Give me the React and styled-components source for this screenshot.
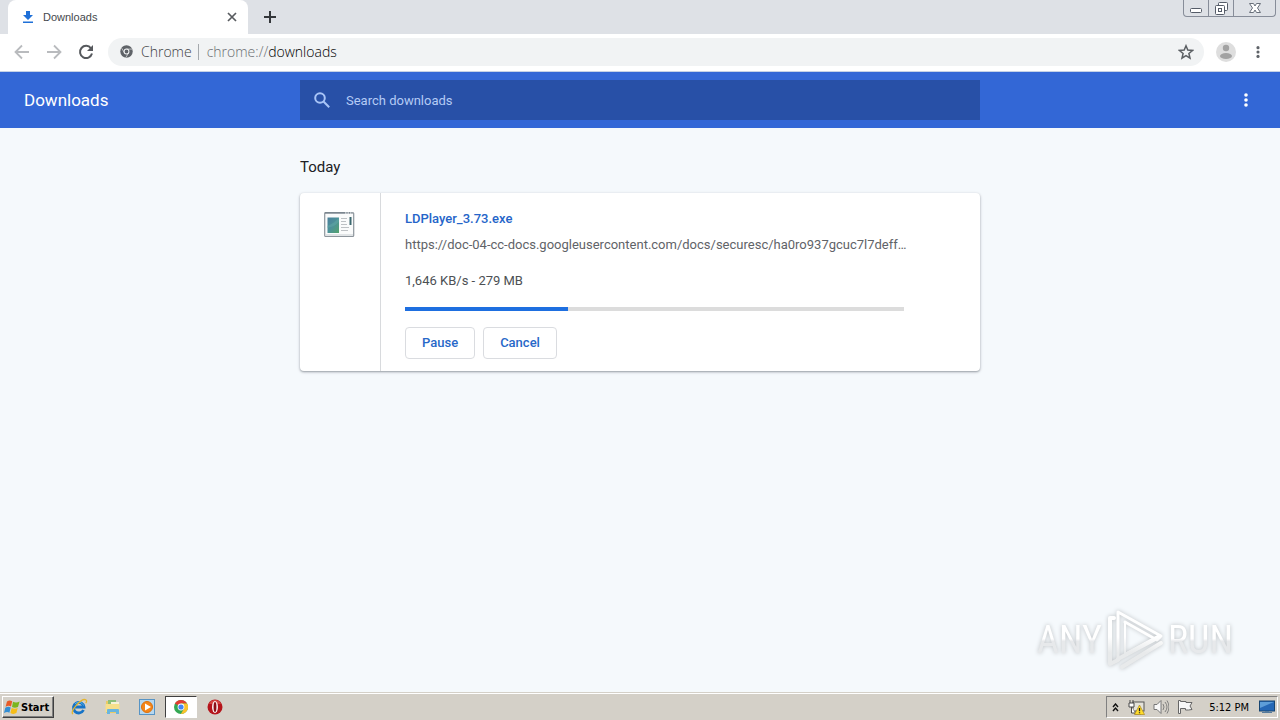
import React from "react";
import styled, { createGlobalStyle } from "styled-components";

const GlobalStyle = createGlobalStyle`
  * { box-sizing: border-box; }
  body { margin: 0; background: #f5f9fc; font-family: Roboto, sans-serif; }
  button, input { font: inherit; color: inherit; }
  button { padding: 0; border: 0; background: none; }
  svg { display: block; flex: none; }
`;

const systemFont = `"DejaVu Sans Condensed", "DejaVu Sans", sans-serif`;

const Page = styled.div`
  min-height: 100vh;
  display: flex;
  flex-direction: column;
`;

const TabStrip = styled.header`
  height: 34px;
  display: flex;
  align-items: stretch;
  background: #dee1e6;
  padding-left: 8px;
`;

const Tab = styled.div`
  width: 240px;
  display: flex;
  align-items: center;
  gap: 8px;
  padding: 0 9px 0 13px;
  background: #fff;
  border-radius: 8px 8px 0 0;
  font-family: "Liberation Sans", sans-serif;
  font-size: 11px;
  color: #45494d;
`;

const TabTitle = styled.span`
  flex: 1;
`;

const IconButton = styled.button`
  display: flex;
  align-items: center;
  justify-content: center;
  width: ${(p) => p.$size || 16}px;
  height: ${(p) => p.$size || 16}px;
`;

const NewTab = styled(IconButton)`
  align-self: center;
  margin-left: 8px;
`;

const WindowControls = styled.div`
  margin-left: auto;
  margin-right: 4px;
  height: 17px;
  display: flex;
  border: 1px solid #878d99;
  border-top: 0;
  border-radius: 0 0 4px 4px;
`;

const WindowButton = styled.button`
  width: ${(p) => p.$width}px;
  display: flex;
  justify-content: center;
  align-items: center;
  & + & { border-left: 1px solid #878d99; }
`;

const Toolbar = styled.nav`
  height: 38px;
  display: flex;
  align-items: center;
  gap: 16px;
  padding: 0 16px 2px 14px;
  background: #fff;
  border-bottom: 1px solid #c5d2e6;
`;

const AddressBar = styled.div`
  flex: 1;
  height: 28px;
  display: flex;
  align-items: center;
  margin-left: -2px;
  margin-right: -4px;
  padding: 0 10px 0 12px;
  border-radius: 14px;
  background: #f1f3f4;
  font-family: "Open Sans", "Noto Sans", sans-serif;
  font-weight: 300;
  font-size: 14px;
  color: #3c4043;
`;

const Scheme = styled.span`
  margin-left: 8px;
  padding-right: 6px;
  line-height: 16px;
  border-right: 1px solid #a5a9ad;
`;

const Url = styled.span`
  flex: 1;
  margin-left: 8px;
  color: #6a6e72;
  b { font-weight: inherit; color: #000; }
`;

const AppBar = styled.header`
  height: 56px;
  display: grid;
  grid-template-columns: 1fr 680px 1fr;
  align-items: center;
  background: #3367d6;
  color: #fff;
`;

const AppTitle = styled.h1`
  margin: 0;
  padding-left: 24px;
  font-size: 17px;
  font-weight: 400;
`;

const SearchField = styled.label`
  height: 40px;
  display: flex;
  align-items: center;
  gap: 14px;
  padding: 0 12px;
  background: #2850a7;
`;

const SearchInput = styled.input`
  flex: 1;
  border: 0;
  padding: 0;
  outline: 0;
  background: transparent;
  font-size: 13px;
  &::placeholder { color: #b5cbf5; opacity: 1; }
`;

const MoreButton = styled(IconButton)`
  justify-self: end;
  margin-right: 24px;
`;

const Content = styled.main`
  flex: 1;
  width: 680px;
  max-width: 100%;
  margin: 0 auto;
  padding-top: 29px;
`;

const DateHeading = styled.h2`
  margin: 0 0 16px;
  font-size: 15px;
  line-height: 20px;
  font-weight: 400;
  color: #202124;
`;

const Card = styled.article`
  display: flex;
  min-height: 178px;
  background: #fff;
  border-radius: 4px;
  box-shadow: 0 1px 2px #9da3aa, 0 1px 3px 1px #e2e6ea;
`;

const FileIcon = styled.div`
  width: 81px;
  padding: 17px 24px;
  border-right: 1px solid #d8dadd;
`;

const Details = styled.div`
  flex: 1;
  min-width: 0;
  padding: 16px 76px 12px 24px;
  font-size: 13px;
  line-height: 20px;
  color: #5f6368;
`;

const FileName = styled.a`
  display: block;
  font-weight: 500;
  color: #2565c9;
  text-decoration: none;
`;

const SourceLink = styled.a`
  display: block;
  margin-top: 6px;
  white-space: nowrap;
  color: inherit;
  text-decoration: none;
`;

const Status = styled.div`
  margin-top: 16px;
  color: #4c5054;
`;

const Track = styled.div`
  height: 4px;
  margin: 16px 0;
  background: #dcdcdc;
`;

const Fill = styled.div`
  height: 100%;
  background: #1e6fe0;
`;

const Actions = styled.div`
  display: flex;
  gap: 8px;
`;

const ActionButton = styled.button`
  height: 32px;
  padding: 0 16px;
  border: 1px solid #dadce0;
  border-radius: 4px;
  font-weight: 500;
  color: #2868c8;
`;

const Watermark = styled.div`
  position: fixed;
  right: 47px;
  bottom: 48px;
  display: flex;
  align-items: center;
  gap: 4px;
  font-family: "Roboto Condensed", Roboto, sans-serif;
  font-size: 38px;
  font-weight: 400;
  line-height: 64px;
  filter: drop-shadow(0 0 2px #bcc0c3);
`;

const WatermarkText = styled.span`
  color: transparent;
  background: linear-gradient(#fff 48%, #e7e9eb 52%);
  background-clip: text;
`;

const Taskbar = styled.footer`
  height: 28px;
  display: flex;
  align-items: center;
  padding: 1px 2px 0;
  background: #d4d0c8;
  border-top: 1px solid #d4d0c8;
  box-shadow: inset 0 1px #fff;
  font-family: ${systemFont};
`;

const StartButton = styled.button`
  width: 52px;
  height: 22px;
  display: flex;
  align-items: center;
  padding-left: 1px;
  border: 1px solid;
  border-color: #fff #404040 #404040 #fff;
  box-shadow: inset -1px -1px #808080;
  font-size: 11px;
  font-weight: 700;
  color: #000;
`;

const QuickLaunch = styled.div`
  display: flex;
  align-items: center;
  gap: 2px;
  margin-left: 9px;
`;

const LaunchButton = styled.button`
  width: 32px;
  height: 22px;
  display: flex;
  align-items: center;
  justify-content: center;
  border: 1px solid;
  border-color: ${(p) => (p.$active ? "#404040 #fff #fff #404040" : "transparent")};
  background: ${(p) => (p.$active ? "#fff" : "none")};
`;

const Tray = styled.div`
  height: 22px;
  margin-left: auto;
  display: flex;
  align-items: center;
  gap: 8px;
  padding: 0 2px 0 4px;
  border: 1px solid;
  border-color: #808080 #fff #fff #808080;
  font-size: 11px;
  color: #000;
`;

const Clock = styled.time`
  margin: 0 2px 0 8px;
`;

const Dots = ({ color, size = 16 }) => (
  <svg width={size} height={size} viewBox="0 0 16 16" fill={color}>
    <circle cx="8" cy="3" r="1.8" /><circle cx="8" cy="8" r="1.8" /><circle cx="8" cy="13" r="1.8" />
  </svg>
);

const DownloadIcon = () => (
  <svg width="14" height="14" viewBox="0 0 14 14" fill="#1f70d8">
    <path d="M5 1h4v4h3L7 10 2 5h3zM2 11.4h10V13H2z" />
  </svg>
);

const Arrow = ({ forward }) => (
  <svg width="16" height="16" viewBox="0 0 16 16" fill="none" stroke="#b9bbbe" strokeWidth="1.8">
    <path d={forward ? "M1 8h13M8 1.5 14.5 8 8 14.5" : "M15 8H2M8 1.5 1.5 8 8 14.5"} />
  </svg>
);

const ReloadIcon = () => (
  <svg width="16" height="16" viewBox="0 0 16 16">
    <path d="M13 4.3A6.1 6.1 0 1 0 14 9.6" fill="none" stroke="#56595d" strokeWidth="2" />
    <path d="M15 1v6H9z" fill="#56595d" />
  </svg>
);

const ChromeMono = () => (
  <svg width="13" height="13" viewBox="0 0 14 14">
    <circle cx="7" cy="7" r="6.7" fill="#5f6368" />
    <circle cx="7" cy="7" r="2.6" fill="none" stroke="#f1f3f4" strokeWidth="1.1" />
    <path d="M7 4.4h6M4.7 8.3 1.8 3.4M9.3 8.3l-3 5.2" stroke="#f1f3f4" strokeWidth=".7" />
  </svg>
);

const StarIcon = () => (
  <svg width="16" height="16" viewBox="0 0 16 16" fill="none" stroke="#5b5f63" strokeWidth="1.5">
    <path d="m8 1.8 1.8 4.3 4.7.4-3.6 3 1.1 4.6L8 11.6 4 14.1l1.1-4.6-3.6-3 4.7-.4z" />
  </svg>
);

const AvatarIcon = () => (
  <svg width="20" height="20" viewBox="0 0 20 20">
    <circle cx="10" cy="10" r="10" fill="#dedede" />
    <circle cx="10" cy="6" r="3.2" fill="#a2a2a2" />
    <ellipse cx="10" cy="14" rx="6" ry="3" fill="#a2a2a2" />
  </svg>
);

const SearchIcon = () => (
  <svg width="20" height="20" viewBox="0 0 20 20" fill="none" stroke="#a9c5f7" strokeWidth="2">
    <circle cx="8" cy="8" r="4.8" /><path d="m11.5 11.5 5.7 5.7" />
  </svg>
);

const ProgramIcon = () => (
  <svg width="32" height="28" viewBox="0 0 32 28">
    <defs>
      <linearGradient id="screen" x2="1" y2="1">
        <stop stopColor="#4a7f9b" /><stop offset=".5" stopColor="#4d9299" /><stop offset="1" stopColor="#53a36c" />
      </linearGradient>
    </defs>
    <rect x=".7" y="2.5" width="29" height="24" rx="1" fill="#fafbfb" stroke="#8d959c" strokeWidth="1.2" />
    <path d="M1 3h28" stroke="#75808a" strokeWidth="1.4" />
    <path d="M21 3h8" stroke="#fff" strokeWidth="1" strokeDasharray="1.5 1" />
    <rect x="3.5" y="7.5" width="11.5" height="15.5" fill="url(#screen)" />
    <path d="M3.5 16c5-2 8-5 11.500-8v4c-4 4-8 5-11.500 6z" fill="#62aaa6" opacity=".5" />
    <path d="M17 8.500h6M17 11.500h5M17 14.500h6M17 17.500h8M17 20.500h7" stroke="#bdc1c4" />
    <rect x="25.500" y="7" width="2" height="8" fill="#3d6970" />
    <path d="M2 25h27" stroke="#c7cdd1" />
  </svg>
);

const PlayLogo = () => (
  <svg width="58" height="64" viewBox="0 0 58 64" fill="none" strokeLinejoin="round" strokeLinecap="round">
    <defs>
      <linearGradient id="mark" x2="0" y2="64" gradientUnits="userSpaceOnUse">
        <stop offset=".45" stopColor="#fff" /><stop offset=".7" stopColor="#e8eaeb" />
      </linearGradient>
    </defs>
    <g stroke="url(#mark)" strokeWidth="4">
      <path d="M8 10H4v46l8-4" />
      <path d="M12 50V4l43 24-4 4L19 14" strokeWidth="3" />
      <path d="M19 14v32l33-18" strokeWidth="2" />
      <path d="M12 51l41-22M55 35 16 59" />
    </g>
  </svg>
);

const WindowsFlag = () => (
  <svg width="17" height="17" viewBox="0 0 17 17">
    <path d="M3 2.5c2-1.4 3.5-1.2 5.2-.2L7 7.5C5.4 6.6 3.8 6.6 1.6 7.8z" fill="#e75b28" />
    <path d="M9 2.8c2 1 4 1.1 6.6-.2L14 8c-2.4 1-4.2.8-6 0z" fill="#7ab51d" />
    <path d="M1.3 8.8c2-1.2 3.8-1.2 5.4-.3l-1.3 5.2C3.8 12.8 2.3 12.9 0 14z" fill="#338ed4" />
    <path d="M7.7 9c2 .9 3.8 1 6 .1l-1.3 5c-2 1.2-4 1-6-.1z" fill="#f6bd18" />
  </svg>
);

const ExplorerIcon = () => (
  <svg width="18" height="18" viewBox="0 0 18 18" fill="none">
    <path d="M13.500 12A5.300 5.300 0 1 1 14 9H4.500" stroke="#1673c7" strokeWidth="2.800" />
    <path d="M13.500 7.500A5 5 0 0 0 5 6" stroke="#55b7ed" />
    <path d="M3 16C-1 14 12-1 16 2c1.300 1-.3 3.200-.3 3.200" stroke="#e5b52e" strokeWidth="1.3" />
  </svg>
);

const FolderIcon = () => (
  <svg width="18" height="18" viewBox="0 0 18 18">
    <path d="M2 3h5l1 1h7v11H2z" fill="#e9cb65" />
    <path d="M4 2h8v5H4z" fill="#8dbf78" /><path d="M7 4h8v5H7z" fill="#f8f3d7" />
    <path d="M1.5 6h14v8h-14z" fill="#f7df8b" />
    <path d="M3 16v-4q0-1 1-1h10q1 0 1 1v4h-3v-2H6v2z" fill="#69b5df" />
  </svg>
);

const MediaIcon = () => (
  <svg width="18" height="18" viewBox="0 0 18 18">
    <rect x="1.500" y="1.500" width="15" height="15" fill="#b6d7ef" stroke="#5794c5" />
    <circle cx="9" cy="9" r="5.500" fill="#f58518" stroke="#dc710d" />
    <path d="m7 5.500 6 3.500-6 3.500z" fill="#fff" />
  </svg>
);

const ChromeIcon = () => (
  <svg width="16" height="16" viewBox="0 0 16 16">
    <circle cx="8" cy="8" r="7" fill="#34a853" />
    <path d="M8 8 1.9 4.5A7 7 0 0 1 14.1 4.5H8z" fill="#e23c31" />
    <path d="M8 4.5h6.1A7 7 0 0 1 7.8 15L11 9.8z" fill="#fbc22b" />
    <circle cx="8" cy="8" r="3.4" fill="#fff" /><circle cx="8" cy="8" r="2.6" fill="#4285f4" />
  </svg>
);

const OperaIcon = () => (
  <svg width="16" height="16" viewBox="0 0 16 16">
    <circle cx="8" cy="8" r="7.5" fill="#b5141b" />
    <path d="M2 5q2-4 6-4t6 4z" fill="#d6433f" />
    <ellipse cx="8" cy="8" rx="3" ry="6" fill="#f9eeee" />
    <ellipse cx="8" cy="8" rx="1.4" ry="5" fill="#8d0f16" />
  </svg>
);

const NetworkIcon = () => (
  <svg width="17" height="16" viewBox="0 0 17 16">
    <rect x="5" y="3" width="11" height="9" fill="#e4e2da" stroke="#555" />
    <path d="M7 12v3h6" stroke="#555" fill="none" />
    <path d="M2 1v3M5 1v3M1 4h5v4H1zM3.5 8v6H7" fill="#fff" stroke="#4b4b4b" />
    <path d="m11.5 6 5 9.5h-10z" fill="#ffdc2b" stroke="#aa8820" strokeWidth=".7" />
    <path d="M11.5 9v3.2M11.5 13.2v1" stroke="#222" strokeWidth="1.3" />
  </svg>
);

const SpeakerIcon = () => (
  <svg width="16" height="16" viewBox="0 0 16 16" fill="none" stroke="#777">
    <path d="M1 5.5h3l4-4v13l-4-4H1z" fill="#f8f8f8" />
    <path d="M10 5q2 3 0 6M12 3q4 5 0 10M14 1.5q4 6.5 0 13" strokeWidth=".9" />
  </svg>
);

const FlagIcon = () => (
  <svg width="16" height="16" viewBox="0 0 16 16" fill="#f7f7f7" stroke="#666">
    <path d="M1.500 1.500v13h2V9.500h5V11h3l3.500-.5-2-3.500 2-3.500H9V2.500H3.500v-1z" />
  </svg>
);

const MonitorIcon = () => (
  <svg width="16" height="16" viewBox="0 0 16 16">
    <rect x=".5" y="2" width="15" height="10" fill="#2568b6" stroke="#174571" />
    <path d="M1 3h14L1 9z" fill="#5d9ed9" /><path d="M6 12h4v1h3v1H3v-1h3z" fill="#557a9c" />
  </svg>
);

function BrowserChrome() {
  return (
    <>
      <TabStrip>
        <Tab>
          <DownloadIcon />
          <TabTitle>Downloads</TabTitle>
          <IconButton $size={14} aria-label="Close tab">
            <svg width="10" height="10" viewBox="0 0 10 10" stroke="#585b5f" strokeWidth="1.7"><path d="m1 1 8 8M9 1 1 9" /></svg>
          </IconButton>
        </Tab>
        <NewTab $size={28} aria-label="New tab">
          <svg width="12" height="12" viewBox="0 0 12 12" stroke="#34373b" strokeWidth="2"><path d="M6 0v12M0 6h12" /></svg>
        </NewTab>
        <WindowControls>
          <WindowButton $width={24} aria-label="Minimize">
            <svg width="14" height="14" viewBox="0 0 14 14" fill="#fff" stroke="#555c68"><rect x="1.5" y="7.5" width="11" height="4" rx="1" /></svg>
          </WindowButton>
          <WindowButton $width={25} aria-label="Restore">
            <svg width="14" height="14" viewBox="0 0 14 14" fill="#fff" stroke="#555c68"><rect x="4.5" y="1.5" width="9" height="8" rx="1" /><rect x="1.5" y="4.5" width="9" height="9" rx="1" /><rect x="4.5" y="7.5" width="3" height="3" /></svg>
          </WindowButton>
          <WindowButton $width={42} aria-label="Close window">
            <svg width="14" height="14" viewBox="0 0 14 14" fill="#fff" stroke="#69707b"><path d="M1.5 2.5h4L7 5l1.5-2.5h4L9.5 7l3 4.5h-4L7 9l-1.5 2.5h-4l3-4.5z" /></svg>
          </WindowButton>
        </WindowControls>
      </TabStrip>
      <Toolbar>
        <IconButton aria-label="Back"><Arrow /></IconButton>
        <IconButton aria-label="Forward"><Arrow forward /></IconButton>
        <IconButton aria-label="Reload"><ReloadIcon /></IconButton>
        <AddressBar>
          <ChromeMono />
          <Scheme>Chrome</Scheme>
          <Url>chrome://<b>downloads</b></Url>
          <IconButton aria-label="Bookmark"><StarIcon /></IconButton>
        </AddressBar>
        <IconButton $size={20} aria-label="Profile"><AvatarIcon /></IconButton>
        <IconButton $size={12} aria-label="Browser menu"><Dots color="#5f6368" size={14} /></IconButton>
      </Toolbar>
    </>
  );
}

function DownloadCard() {
  const progress = 32.7;
  return (
    <Card>
      <FileIcon><ProgramIcon /></FileIcon>
      <Details>
        <FileName href="#file">LDPlayer_3.73.exe</FileName>
        <SourceLink href="#source">https://doc-04-cc-docs.googleusercontent.com/docs/securesc/ha0ro937gcuc7l7deff…</SourceLink>
        <Status>1,646 KB/s - 279 MB</Status>
        <Track role="progressbar" aria-label="Download progress" aria-valuenow={progress}>
          <Fill style={{ width: `${progress}%` }} />
        </Track>
        <Actions>
          <ActionButton>Pause</ActionButton>
          <ActionButton>Cancel</ActionButton>
        </Actions>
      </Details>
    </Card>
  );
}

function DesktopTaskbar() {
  return (
    <Taskbar>
      <StartButton><WindowsFlag />Start</StartButton>
      <QuickLaunch>
        <LaunchButton aria-label="Internet Explorer"><ExplorerIcon /></LaunchButton>
        <LaunchButton aria-label="File Explorer"><FolderIcon /></LaunchButton>
        <LaunchButton aria-label="Media Player"><MediaIcon /></LaunchButton>
        <LaunchButton $active aria-label="Chrome"><ChromeIcon /></LaunchButton>
        <LaunchButton aria-label="Opera"><OperaIcon /></LaunchButton>
      </QuickLaunch>
      <Tray>
        <IconButton $size={9} aria-label="Show hidden icons">
          <svg width="7" height="9" viewBox="0 0 7 9" fill="none" stroke="#111" strokeWidth="1.4"><path d="m1 4 2.5-3L6 4M1 8l2.5-3L6 8" /></svg>
        </IconButton>
        <NetworkIcon />
        <SpeakerIcon />
        <FlagIcon />
        <Clock>5:12 PM</Clock>
        <MonitorIcon />
      </Tray>
    </Taskbar>
  );
}

export default function App() {
  return (
    <Page>
      <GlobalStyle />
      <BrowserChrome />
      <AppBar>
        <AppTitle>Downloads</AppTitle>
        <SearchField>
          <SearchIcon />
          <SearchInput type="text" placeholder="Search downloads" aria-label="Search downloads" />
        </SearchField>
        <MoreButton $size={20} aria-label="More actions"><Dots color="#fff" /></MoreButton>
      </AppBar>
      <Content>
        <DateHeading>Today</DateHeading>
        <DownloadCard />
      </Content>
      <DesktopTaskbar />
      <Watermark>
        <WatermarkText>ANY</WatermarkText>
        <PlayLogo />
        <WatermarkText>RUN</WatermarkText>
      </Watermark>
    </Page>
  );
}
